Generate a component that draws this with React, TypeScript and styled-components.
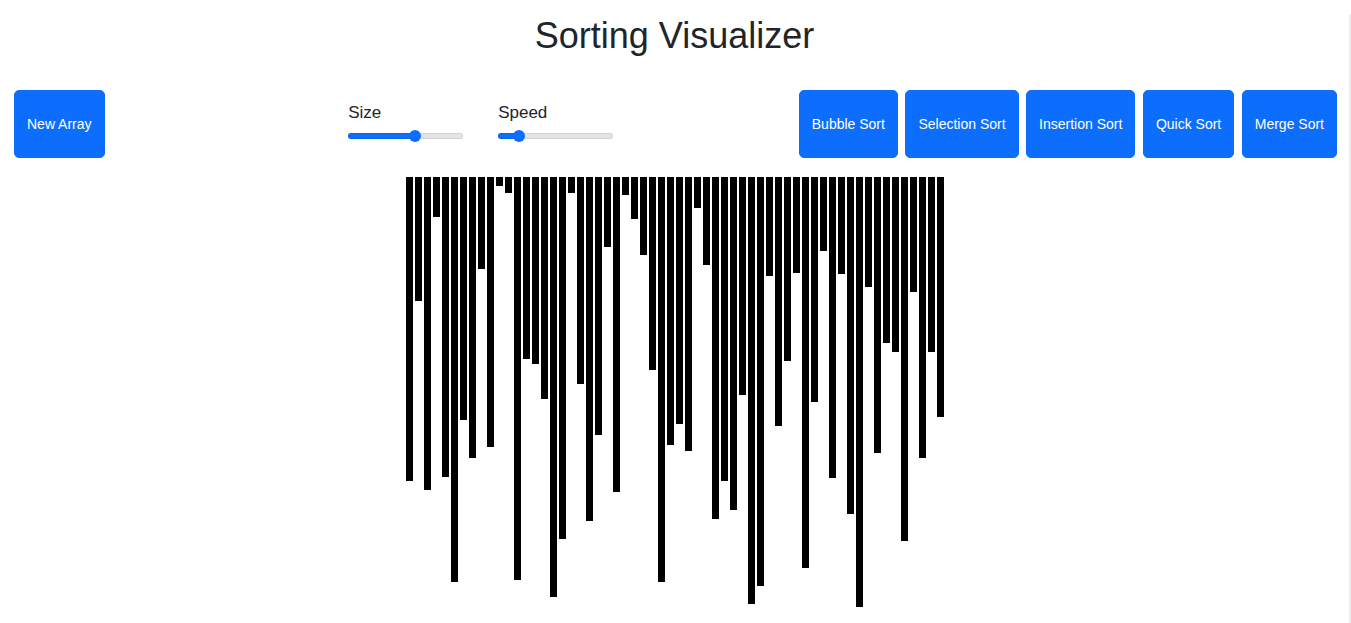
import { useState } from "react";
import styled, { createGlobalStyle } from "styled-components";

const GlobalStyle = createGlobalStyle`
	body {
		margin: 0;
		background: #fff;
		font-family: "Liberation Sans", Arial, sans-serif;
		color: #212529;
	}
`;

// heights read off the array that was on screen
const BARS = [
	304, 124, 313, 40, 300, 405, 243, 281, 92, 270, 9, 16, 403, 182, 187, 222, 420, 362, 16, 207,
	344, 258, 70, 315, 18, 42, 78, 193, 405, 268, 247, 274, 31, 88, 342, 304, 333, 218, 427, 409,
	99, 249, 184, 96, 391, 225, 74, 301, 97, 337, 430, 110, 276, 166, 175, 364, 115, 281, 175, 240,
];

const Page = styled.div`
	box-sizing: border-box;
	min-height: 100vh;
	border-right: 2px solid #ececec;
`;

const Title = styled.h1`
	margin: 14px 0 33px;
	font-size: 36px;
	line-height: 43px;
	font-weight: 400;
	text-align: center;
	color: #212529;
`;

const Toolbar = styled.div`
	display: flex;
	align-items: center;
	justify-content: space-between;
	padding: 0 12px 0 14px;
`;

const Button = styled.button`
	height: 68px;
	padding: 0 12px;
	border: 1px solid #0d6efd;
	border-radius: 5px;
	background-color: #0d6efd;
	color: #fff;
	font-family: "Liberation Sans", Arial, sans-serif;
	font-size: 14px;
	white-space: nowrap;
	cursor: pointer;

	&:hover {
		background-color: #0b5ed7;
	}
`;

const SliderGroup = styled.div`
	display: flex;
	gap: 35px;
	margin-left: 58px;
	padding-bottom: 4px;
`;

const SliderField = styled.label`
	display: flex;
	flex-direction: column;
	gap: 8px;
	font-size: 17px;
	line-height: 19px;
	color: #212529;
`;

const Range = styled.input`
	-webkit-appearance: none;
	appearance: none;
	width: 115px;
	height: 12px;
	margin: 0;
	background: transparent;
	cursor: pointer;

	&::-webkit-slider-runnable-track {
		height: 6px;
		border-radius: 3px;
		background: linear-gradient(
			to right,
			#0d6efd var(--fill),
			#e4e4e4 var(--fill)
		);
		box-shadow: inset 0 0 0 1px rgba(0, 0, 0, 0.08);
	}

	&::-webkit-slider-thumb {
		-webkit-appearance: none;
		width: 12px;
		height: 12px;
		margin-top: -3px;
		border-radius: 50%;
		background: #0d6efd;
		border: none;
	}
`;

const SortGroup = styled.div`
	display: flex;
	gap: 7.5px;
`;

const BarArea = styled.div`
	display: flex;
	justify-content: center;
	align-items: flex-start;
	margin-top: 19px;
`;

const Bar = styled.div`
	width: 7px;
	margin: 0 1px;
	background-color: #000;
`;

type SliderProps = {
	label: string;
	min: number;
	max: number;
	value: number;
	onChange: (v: number) => void;
};

function Slider({ label, min, max, value, onChange }: SliderProps) {
	const thumb = 6;
	const pct = (value - min) / (max - min);
	const fill = `calc(${thumb}px + ${pct} * (100% - ${thumb * 2}px))`;
	return (
		<SliderField>
			{label}
			<Range
				type="range"
				min={min}
				max={max}
				value={value}
				onChange={(e) => onChange(Number(e.target.value))}
				style={{ ["--fill" as string]: fill }}
			/>
		</SliderField>
	);
}

function App() {
	const [size, setSize] = useState(60);
	const [speed, setSpeed] = useState(15);
	const [bars] = useState(BARS);

	return (
		<Page>
			<GlobalStyle />
			<Title>Sorting Visualizer</Title>
			<Toolbar>
				<Button>New Array</Button>
				<SliderGroup>
					<Slider label="Size" min={5} max={98} value={size} onChange={setSize} />
					<Slider label="Speed" min={1} max={100} value={speed} onChange={setSpeed} />
				</SliderGroup>
				<SortGroup>
					<Button>Bubble Sort</Button>
					<Button>Selection Sort</Button>
					<Button>Insertion Sort</Button>
					<Button>Quick Sort</Button>
					<Button>Merge Sort</Button>
				</SortGroup>
			</Toolbar>
			<BarArea>
				{bars.map((h, i) => (
					<Bar key={i} style={{ height: h }} />
				))}
			</BarArea>
		</Page>
	);
}

export default App;
